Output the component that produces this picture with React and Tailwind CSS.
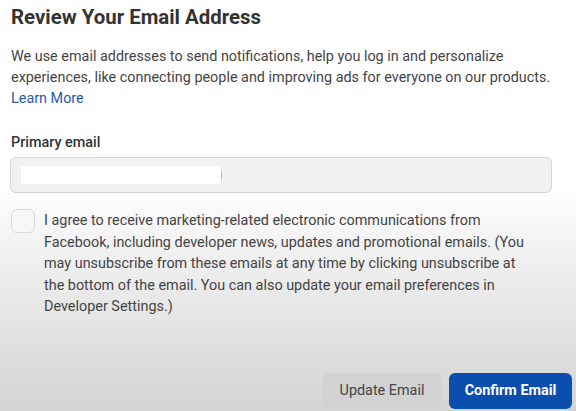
export default function App() {
  return (
    <div
      className="w-[576px] h-[411px] overflow-hidden bg-[linear-gradient(to_bottom,#ffffff_0%,#ffffff_45%,#f2f2f2_60%,#d4d4d4_100%)] text-[#444] px-[11px]"
      style={{ fontFamily: "Roboto, 'Liberation Sans', sans-serif" }}
    >
      <h1 className="pt-[4px] text-[20.4px] leading-[26px] font-bold text-[#333]">
        Review Your Email Address
      </h1>

      <p className="mt-[16px] text-[14.4px] leading-[21px] text-[#444] whitespace-nowrap">
        We use email addresses to send notifications, help you log in and personalize
        <br />
        experiences, like connecting people and improving ads for everyone on our products.
        <br />
        <a className="text-[#2a5aa8]">Learn More</a>
      </p>

      <div className="mt-[24px] text-[14.4px] leading-[20px] font-medium text-[#333]">
        Primary email
      </div>
      <div className="mt-[4px] -ml-[1px] w-[542px] h-[36px] rounded-[6px] border border-[#d6d6d6] bg-[#f1f1f1] flex items-center pl-[10px]">
        <div className="w-[200px] h-[18px] bg-white" />
        <div className="w-px h-[8px] bg-[#bbb]" />
      </div>

      <div className="mt-[16px] flex gap-[9px]">
        <div className="shrink-0 w-[24px] h-[24px] rounded-[6px] border border-[#dadada] bg-[#f7f7f7]" />
        <p className="mt-[1px] text-[14.4px] leading-[21.5px] text-[#444] whitespace-nowrap">
          I agree to receive marketing-related electronic communications from
          <br />
          Facebook, including developer news, updates and promotional emails. (You
          <br />
          may unsubscribe from these emails at any time by clicking unsubscribe at
          <br />
          the bottom of the email. You can also update your email preferences in
          <br />
          Developer Settings.)
        </p>
      </div>

      <div className="mt-[55px] flex justify-end gap-[8px] -mr-[7px]">
        <button className="w-[118px] h-[36px] rounded-[6px] bg-[#d2d2d2] text-[14.4px] text-[#444]">
          Update Email
        </button>
        <button className="w-[123px] h-[36px] rounded-[6px] bg-[#0a4eae] text-[14.4px] font-bold text-white">
          Confirm Email
        </button>
      </div>
    </div>
  );
}
